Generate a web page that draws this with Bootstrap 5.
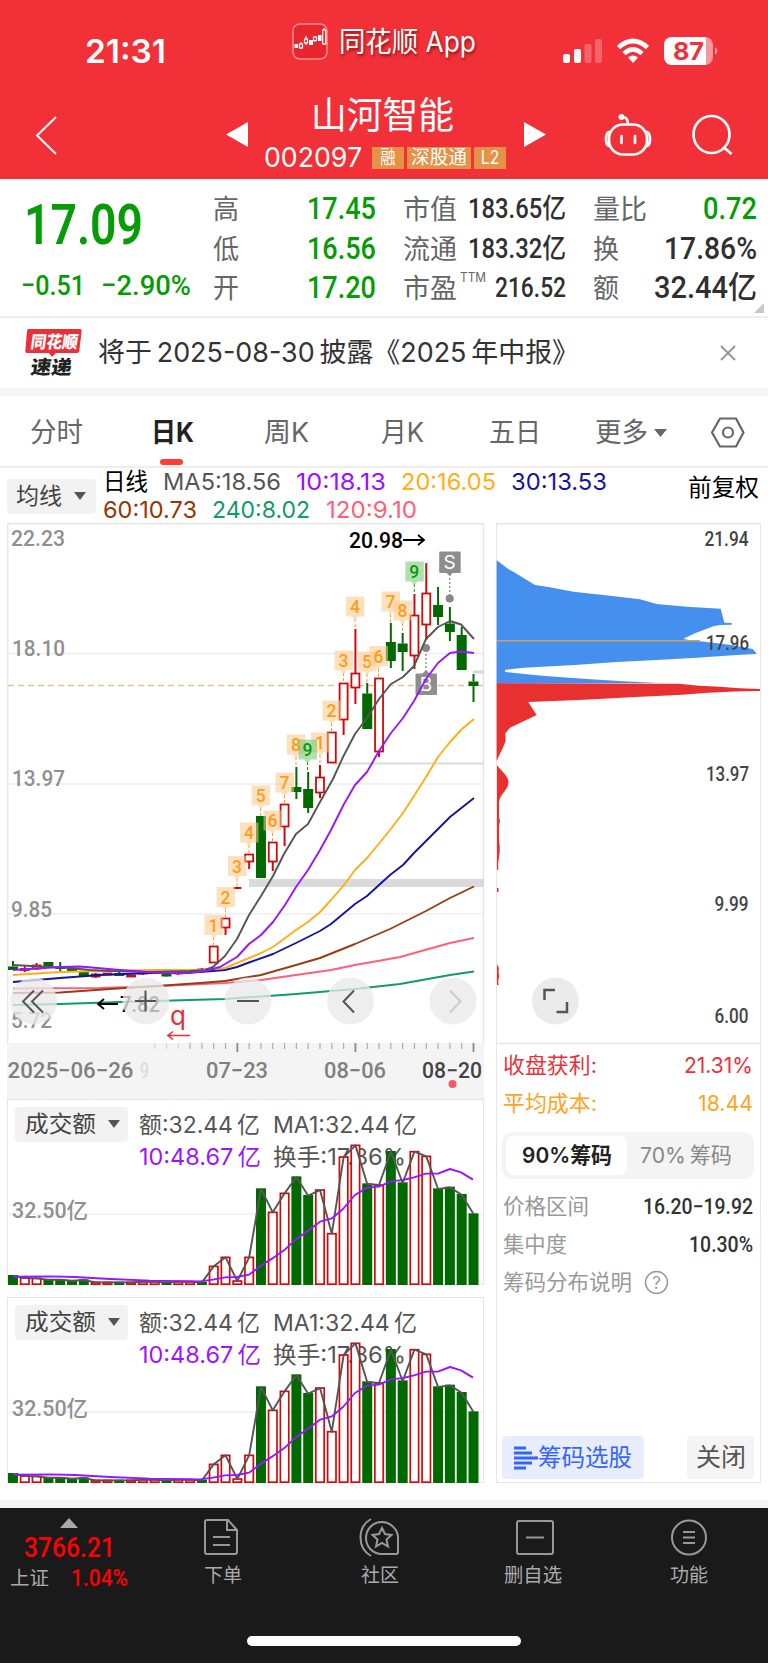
<!DOCTYPE html>
<html lang="zh-CN">
<head>
<meta charset="utf-8">
<meta name="viewport" content="width=device-width, initial-scale=1">
<title>山河智能 002097</title>
<link rel="stylesheet" href="https://cdn.jsdelivr.net/npm/bootstrap@5.3.0/dist/css/bootstrap.min.css">
<style>
body{width:768px;margin:0;background:#fff;color:#333;font-family:Inter,"Noto Sans CJK SC",sans-serif;line-height:1;overflow-x:hidden}
svg{display:block;flex:none;overflow:visible}
svg text{font-family:Inter,"Noto Sans CJK SC",sans-serif}
.din,svg text.din{font-family:Roboto,"Noto Sans CJK SC",sans-serif;font-weight:500}
.fit{display:inline-block;white-space:nowrap;flex:none;line-height:1}
.fit>span{display:inline-block;transform-origin:0 50%}
.topbar{background:#f13038;color:#fff;height:179px}
.status{height:84px;padding-left:85px}
.clock{font-size:33px;font-weight:600;margin-top:35px}
.appicon{margin:23px 0 0 126px}
.appname{font-size:28px;margin:28px 0 0 11px;text-shadow:1px 2px 3px rgba(90,0,0,.65)}
.signals{margin:30px 0 0 86px}
.titlebar{height:95px;padding-left:34px}
.stockname{font-size:37px;margin:13px 0 0 46px}
.stockcode{font-size:27.5px}
.codeline{margin-top:13px;height:22px}
.tagbox{background:#e59146;height:22px;font-size:19px;padding:1px 4px 0}
.quote{height:139px;border-bottom:2px solid #eee;padding:11px 11px 0 22px;position:relative}
.down{color:#069c06}
.price{font-size:55px;margin:8px 0 0 2px;font-weight:600!important}
.delta{font-size:28.5px;margin:19px 0 0 -1px;height:28px}
.qgrid{display:grid;grid-template-columns:163px 163px 164px;column-gap:27px;margin-left:22px;align-content:start;width:544px}
.qcell{height:39.4px;display:flex;align-items:center;justify-content:space-between}
.qcell .lab{font-size:27px;color:#666}
.big{font-size:30.5px}.mid{font-size:27px}
.ink{color:#303030}
.corner{position:absolute;right:4px;bottom:3px}
.notice{height:70px;padding-left:24px;font-size:27.5px}
.band{height:8px;background:#f4f4f4}
.tabs{height:72px;border-bottom:2px solid #eee;font-size:27px;color:#666;padding:3px 0 0 30px}
.tabs .on{color:#222;font-weight:700;position:relative}
.tabs .on:after{content:"";position:absolute;left:9px;top:40px;width:23px;height:6px;border-radius:3px;background:#fe3d33}
.legendrow{height:55px;padding-left:7px;font-size:23.5px}
.drop{background:#f2f2f2;border-radius:4px;height:35px;color:#444;flex:none}
.charts{padding-left:7px;height:960px;gap:12px}
.klcol{width:477px}
.panel{border:1.5px solid #e6e6e6;height:186px;width:477px;position:relative}
.panel svg{position:absolute;left:-1px;top:0;z-index:2}
.panel .info{padding:7px 0 0 7px;font-size:23px;color:#555}
.info .l2{margin-top:-1px}
.chipcol{width:265px;border:1.5px solid #e6e6e6;border-top:0;font-size:21.5px}
.chipcol .line{height:37.5px;padding:0 7px 0 6px}
.seg{height:47px;margin:10px 6px 9px 5px;background:#f4f4f4;border-radius:10px;padding:4px}
.seg .act{background:#fff;border-radius:8px;width:121px;height:39px;color:#222;font-weight:600}
.seg .oth{width:118px;color:#888}
.pick{background:#e8edfd;color:#3264ff;height:43px;width:142px;border-radius:4px;font-size:24px}
.shut{background:#f4f4f4;color:#555;height:43px;width:67px;border-radius:4px;font-size:25px}
.grayband{height:25px;border-bottom:8px solid #f4f4f4}
.bottombar{height:155px;background:#1a1a1a;color:#aaa;position:relative;font-size:19.5px}
.bottombar .item{display:flex;flex-direction:column;align-items:center}
.bottombar .item svg{margin-bottom:9px}
.home{position:absolute;left:247px;top:128px;width:274px;height:10px;border-radius:5px;background:#fff}
</style>
</head>
<body>
<header class="topbar">
  <div class="status d-flex align-items-start">
    <span class="fit clock" data-w="81">21:31</span>
    <svg class="appicon" width="36" height="37" viewBox="0 0 36 37"><rect x="1" y="1" width="34" height="35" rx="7" fill="#e9262d" stroke="#ff8e90" stroke-width="1.5"/><g fill="none" stroke="#fff" stroke-width="1.2"><path d="M9 19v7M14 13v9M23 13v6M32 5v17"/><g fill="#e9262d"><rect x="7.5" y="21" width="3" height="4"/><rect x="12.5" y="16" width="3" height="4"/><rect x="21.5" y="14" width="3" height="3.500"/><rect x="30.700" y="7" width="3" height="14"/></g></g><path d="M2.500 21h3.500v4H2.500zM17 17h4v5h-4zM26 12h3.500v6H26z" fill="#fff"/></svg>
    <span class="fit appname" data-w="137">同花顺 App</span>
    <svg class="signals" width="160" height="42" viewBox="560 30 160 42"><g fill="#fff"><rect x="561" y="54" width="7" height="9" rx="2"/><rect x="572" y="49" width="7" height="14" rx="2"/><g opacity=".25"><rect x="582.500" y="44" width="7" height="19" rx="2"/><rect x="593" y="39" width="7" height="24" rx="2"/></g><path d="M631 63l-5-5.500q5-4 10 0z"/><rect x="662" y="37" width="49" height="28" rx="8" opacity=".5"/><path d="M670 37h34v28h-34a8 8 0 0 1-8-8V45a8 8 0 0 1 8-8z"/><path d="M713 47q5 4 0 8z" opacity=".5"/></g><g fill="none" stroke="#fff" stroke-width="4.600"><path d="M616.500 47.500q14.500-13 29 0M622 53.700q9-8.500 18 0"/></g><text x="671" y="59.500" font-size="24.500" font-weight="700" fill="#f13038" textLength="31" lengthAdjust="spacingAndGlyphs">87</text></svg>
  </div>
  <div class="titlebar d-flex align-items-start">
    <svg width="26" height="46" viewBox="34 112 26 46" style="margin-top:28px"><path d="M56 117L37 135.500l19 18.500" fill="none" stroke="#fff" stroke-width="2"/></svg>
    <svg width="24" height="28" viewBox="225 121 24 28" style="margin:37px 0 0 165px"><path d="M248 122v25l-22-12.500z" fill="#fff"/></svg>
    <div style="width:274px">
      <div class="ps-3"><span class="fit stockname" data-w="143">山河智能</span></div>
      <div class="codeline d-flex align-items-center" style="margin-left:15px"><span class="fit stockcode" data-w="98">002097</span><span class="tagbox" style="margin-left:10px"><span class="fit" data-w="24">&nbsp;融&nbsp;</span></span><span class="tagbox" style="margin-left:3px"><span class="fit" data-w="56">深股通</span></span><span class="tagbox" style="margin-left:3px"><span class="fit" data-w="24">&thinsp;L2&thinsp;</span></span></div>
    </div>
    <svg width="24" height="28" viewBox="523 121 24 28" style="margin-top:37px"><path d="M524 122v25l22-12.500z" fill="#fff"/></svg>
    <svg width="130" height="46" viewBox="605 112 130 46" style="margin:28px 0 0 58px"><g fill="none" stroke="#fff" stroke-width="2.700"><path d="M622 117c5 0 6 3 6 7"/><rect x="609" y="124.500" width="38" height="30" rx="14"/><path d="M609 132q-3 1-3 7t3 7M647 132q3 1 3 7t-3 7M621.500 136v7M635 136v7" stroke-linecap="round"/><ellipse cx="711.500" cy="134.500" rx="18" ry="18.500"/><path d="M724 147.500l7.500 6.500"/></g><circle cx="621.500" cy="117" r="3" fill="#fff"/></svg>
  </div>
</header>

<section class="quote d-flex down">
  <div style="width:169px">
    <div><span class="fit din price" data-w="119">17.09</span></div>
    <div class="delta d-flex align-items-center din"><span class="fit" data-w="64">−0.51</span><span class="fit ms-3" data-w="90">−2.90%</span></div>
  </div>
  <div class="qgrid">
    <div class="qcell"><span class="fit lab" data-w="26">高</span><span class="fit din big" data-w="69">17.45</span></div>
    <div class="qcell"><span class="fit lab" data-w="54">市值</span><span class="fit din mid ink" data-w="98">183.65亿</span></div>
    <div class="qcell"><span class="fit lab" data-w="54">量比</span><span class="fit din big" data-w="54">0.72</span></div>
    <div class="qcell"><span class="fit lab" data-w="26">低</span><span class="fit din big" data-w="69">16.56</span></div>
    <div class="qcell"><span class="fit lab" data-w="54">流通</span><span class="fit din mid ink" data-w="98">183.32亿</span></div>
    <div class="qcell"><span class="fit lab" data-w="26">换</span><span class="fit din big ink" data-w="93">17.86%</span></div>
    <div class="qcell"><span class="fit lab" data-w="26">开</span><span class="fit din big" data-w="69">17.20</span></div>
    <div class="qcell"><span class="lab d-flex"><span class="fit" data-w="54">市盈</span><span class="fit" data-w="26" style="font-size:13px;margin:-4px 0 0 3px">TTM</span></span><span class="fit din mid ink" data-w="71">216.52</span></div>
    <div class="qcell"><span class="fit lab" data-w="26">额</span><span class="fit din big ink" data-w="103">32.44亿</span></div>
  </div>
  <svg class="corner" width="10" height="10"><path d="M10 0v10H0z" fill="#c8c8c8"/></svg>
</section>

<section class="notice d-flex align-items-center">
  <svg width="60" height="52" viewBox="24 327 60 52"><path d="M28.500 329H80q2 0 1.700 2l-2.500 20q-.3 2-2 2H56l-4 4-3-4H27q-2 0-1.700-2L27 331q.2-2 1.500-2z" fill="#eb3138"/><g transform="skewX(-8)" font-weight="900"><text x="79" y="348" font-size="17" fill="#fff" textLength="47" lengthAdjust="spacingAndGlyphs">同花顺</text><text x="82.500" y="374" font-size="19" fill="#222" textLength="41" lengthAdjust="spacingAndGlyphs">速递</text></g></svg>
  <span class="fit" data-w="481" style="margin-left:14px">将于&thinsp;2025-08-30&thinsp;披露《2025&thinsp;年中报》</span>
  <svg width="18" height="18" viewBox="0 0 18 18" style="margin-left:140px"><path d="M2 2l14 14M16 2L2 16" stroke="#999" stroke-width="2"/></svg>
</section>
<div class="band"></div>

<nav class="tabs d-flex align-items-center">
  <span class="fit" data-w="53">分时</span>
  <span class="fit on" data-w="43" style="margin-left:68px">日K</span>
  <span class="fit" data-w="45" style="margin-left:70px">周K</span>
  <span class="fit" data-w="43" style="margin-left:72px">月K</span>
  <span class="fit" data-w="52" style="margin-left:65px">五日</span>
  <span class="fit" data-w="53" style="margin-left:54px">更多</span>
  <svg width="13" height="10" style="margin-left:6px"><path d="M0 1h13L6.500 9z" fill="#666"/></svg>
  <svg width="36" height="32" viewBox="0 0 36 32" style="margin-left:43px"><g fill="none" stroke="#666" stroke-width="2.200"><path d="M10 1.500h16l7.500 14L26 29.500H10L2 15.500z" stroke-linejoin="round"/><circle cx="18" cy="15.500" r="5"/></g></svg>
</nav>

<section class="legendrow d-flex align-items-start">
  <div class="drop d-flex align-items-center" style="width:89px;margin-top:11px;padding-left:9px"><span class="fit" data-w="46" style="font-size:23px">均线</span><svg width="12" height="9" style="margin-left:12px"><path d="M0 0h12L6 8z" fill="#555"/></svg></div>
  <div style="margin:1px 0 0 7px;width:585px">
    <div class="d-flex align-items-center" style="height:25px"><span class="fit text-black" data-w="45">日线</span><span class="fit" data-w="118" style="margin-left:15px;color:#555">MA5:18.56</span><span class="fit" data-w="90" style="margin-left:15px;color:#a010ff">10:18.13</span><span class="fit" data-w="95" style="margin-left:15px;color:#ffae13">20:16.05</span><span class="fit" data-w="96" style="margin-left:15px;color:#1514a0">30:13.53</span></div>
    <div class="d-flex align-items-center" style="height:31px"><span class="fit" data-w="94" style="color:#983506">60:10.73</span><span class="fit" data-w="98" style="margin-left:15px;color:#109b67">240:8.02</span><span class="fit" data-w="91" style="margin-left:16px;color:#ff6079">120:9.10</span></div>
  </div>
  <span class="fit text-black" data-w="71" style="margin-top:8px">前复权</span>
</section>

<main class="charts d-flex">
  <div class="klcol">
    <svg id="kline" width="477" height="576" viewBox="7 523 477 576"></svg>
    <div class="panel vol"></div>
    <div class="panel vol" style="margin-top:12px"></div>
  </div>
  <aside class="chipcol d-flex flex-column">
    <svg id="chips" width="265" height="521" viewBox="496 523 265 521" style="margin-left:-1px"></svg>
    <div class="line d-flex align-items-center justify-content-between" style="color:#eb3138;margin-top:3px"><span class="fit" data-w="94">收盘获利:</span><span class="fit" data-w="69">21.31%</span></div>
    <div class="line d-flex align-items-center justify-content-between" style="color:#ffa31f"><span class="fit" data-w="94">平均成本:</span><span class="fit" data-w="55">18.44</span></div>
    <div class="seg d-flex align-items-center"><span class="act d-flex align-items-center justify-content-center"><span class="fit" data-w="90">90%筹码</span></span><span class="oth d-flex justify-content-center"><span class="fit" data-w="92">70%&thinsp;筹码</span></span></div>
    <div class="line d-flex align-items-center justify-content-between"><span class="fit" data-w="86" style="color:#999">价格区间</span><span class="fit din" data-w="110">16.20−19.92</span></div>
    <div class="line d-flex align-items-center justify-content-between"><span class="fit" data-w="64" style="color:#999">集中度</span><span class="fit din" data-w="64">10.30%</span></div>
    <div class="line d-flex align-items-center" style="color:#999;padding-top:2px"><span class="fit" data-w="129">筹码分布说明</span><svg width="25" height="25" style="margin-left:12px"><circle cx="12.500" cy="12.500" r="11" fill="none" stroke="#999" stroke-width="1.500"/><text x="12.500" y="18.500" font-size="17" text-anchor="middle" fill="#999">?</text></svg></div>
    <div class="mt-auto d-flex justify-content-between" style="padding:0 6px 3px 5px">
      <span class="pick d-flex align-items-center justify-content-center"><svg width="24" height="24"><path d="M0 2h12M0 7h18M0 12h24M0 17h18M0 22h12" stroke="#3264ff" stroke-width="3"/></svg><span class="fit" data-w="94">筹码选股</span></span>
      <span class="shut d-flex align-items-center justify-content-center"><span class="fit" data-w="50">关闭</span></span>
    </div>
  </aside>
</main>
<div class="grayband"></div>

<footer class="bottombar d-flex">
  <div style="width:130px;padding:10px 0 0 10px">
    <svg width="18" height="10" style="margin-left:50px"><path d="M9 0l9 10H0z" fill="#aaa"/></svg>
    <div class="din" style="color:#f00;font-size:28px;margin:6px 0 0 14px"><span class="fit" data-w="91">3766.21</span></div>
    <div class="d-flex align-items-center" style="margin-top:5px"><span class="fit" data-w="39">上证</span><span class="fit din" data-w="57" style="color:#f00;font-size:23px;margin-left:22px">1.04%</span></div>
  </div>
  <div class="item" style="width:80px;margin-left:51px;padding-top:10px"><svg width="36" height="39" viewBox="0 0 36 39" fill="none" stroke="#999" stroke-width="2"><path d="M4 2h21l9 10v22q0 2-2 2H4q-2 0-2-2V4q0-2 2-2zM24 2v10h10M10 19h17M10 27h17"/></svg><span class="fit" data-w="38" style="margin-left:3px">下单</span></div>
  <div class="item" style="width:80px;margin-left:78px;padding-top:10px"><svg width="42" height="39" viewBox="0 0 42 39" fill="none" stroke="#999" stroke-width="2"><path d="M13 1C-1 9-1 30 13 38M24 4c8 0 16 7 16 16v14q0 2-2 2H24C14 36 8 28 8 20S14 4 24 4z"/><path d="M24 10l3 6 6.500 1-5 4.500 1.500 7-6-3.500-6 3.500 1.500-7-5-4.500 6.500-1z"/></svg><span class="fit" data-w="38" style="margin-left:2px">社区</span></div>
  <div class="item" style="width:80px;margin-left:76px;padding-top:10px"><svg width="40" height="39" viewBox="0 0 40 39" fill="none" stroke="#999" stroke-width="2"><rect x="2" y="3" width="36" height="33" rx="2"/><path d="M11 19.500h18"/></svg><span class="fit" data-w="58" style="margin-right:4px">删自选</span></div>
  <div class="item" style="width:80px;margin-left:74px;padding-top:10px"><svg width="38" height="39" viewBox="0 0 38 39" fill="none" stroke="#999" stroke-width="2"><circle cx="19" cy="19.500" r="17"/><path d="M13 14h12M13 19.500h12M13 25h12"/></svg><span class="fit" data-w="38">功能</span></div>
  <div class="home"></div>
</footer>

<script>
// text(x, baseline, width, string, size, colour, class)
const T=(x,y,w,s,z,c,k='din',e='')=>`<text x="${x}" y="${y}" class="${k}" font-size="${z}" fill="${c}" textLength="${w}" lengthAdjust="spacingAndGlyphs" ${e}>${s}</text>`;
const L=(x1,y1,x2,y2,c,w=1.5,e='')=>`<line x1="${x1}" y1="${y1}" x2="${x2}" y2="${y2}" stroke="${c}" stroke-width="${w}" ${e}/>`;
const P=(p,c)=>`<polyline points="${p}" fill="none" stroke="${c}" stroke-width="1.9" stroke-linejoin="round"/>`;
const X=k=>473.5-11.808*k, RED='#d00a0a', GREEN='#006a00';

// candles: [days before last, colour, body top, body bottom, wick top, wick bottom]
const candles=[[0,'g',681.5,686,674,702],[1,'g',635,670,627,670],[2,'g',623.5,632,607,641],[3,'g',605,617,587,625],[4,'r',593,625,563,640],[5,'r',615,656,594,669],[6,'g',643.5,652,633,671],[7,'g',642,661,623,668],[8,'r',678,752,678,757],[9,'g',693.5,729,683,729],[10,'r',673,688,629,704],[11,'r',683,720,683,735],[12,'r',732,763,732,763],[13,'r',777,793,765,798],[14,'g',789,808,772,813],[15,'g',787,792,767,799],[16,'r',804,827,804,846],[17,'r',842,862,842,871],[18,'g',816,878,816,878],[19,'r',854,862,854,869],[20,'g0',887,889,887,889],[21,'r',918,928,918,935],[22,'r',946,963,946,963],
[23,'r',969,970.5,968,972],[24,'g',970,972,969,973],[25,'r',972,974,971,975],[26,'g',972.5,976.5,971,977],[27,'r',971,973,971,974],[28,'r',972,974,971,975],[29,'r',975,977,975,977],[30,'g',973,976,972,976],[31,'r',973,975,973,975],[32,'r',974,977,973,978],[33,'g',972,976.5,972,976.5],[34,'g',968,971,967,971],[35,'g',967.5,969,962,971],[36,'g',962,966,962,966],[37,'r',965,969,963,970],[38,'r',968.5,970,966,972],[39,'g',966.5,970,961,970]];
let s='<rect x="7" y="1043" width="477" height="56" fill="#f4f4f4"/><path d="M7.700 1043V523.700H483.500V1043" fill="none" stroke="#e6e6e6" stroke-width="1.5"/>';
s+=[653.5,784,914].map(y=>L(8,y,483,y,'#eeeeee')).join('');
s+='<path d="M249 879H484v8H249z" fill="#dadada"/>'+L(331,763.5,484,763.5,'#dcdcdc',2)+L(473,672,484,672,'#d8d8d8',3);
s+=L(8,685.5,483,685.5,'#e0c196',1.3,'stroke-dasharray="6 4"');
s+=T(11,546,54,'22.23',22,'#909090')+T(12,656,53,'18.10',22,'#909090')+T(12,786,53,'13.97',22,'#909090')+T(11,917,41,'9.85',22,'#909090')+T(11,1028,41,'5.72',22,'#909090');
for(const [k,c,a,b,u,d] of candles){const x=X(k);
  if(c=='g0'){s+=L(x-4,888,x+4,888,RED,2);continue}
  s+=L(x,u,x,a,c=='r'?RED:GREEN,2)+L(x,b,x,d,c=='r'?RED:GREEN,2);
  s+=c=='r'?`<rect x="${x-4}" y="${a+.5}" width="8" height="${Math.max(b-a-1,1)}" fill="#fff" stroke="${RED}" stroke-width="1.8"/>`:`<rect x="${x-5}" y="${a}" width="10" height="${b-a}" fill="${GREEN}"/>`}
// count marks above the candles: [label, x, centre y, candle top]
for(const [t,x,y,b] of [['8',296,745,767],['1',320,743,765],['2',331.5,711,732],['3',343.5,661,683],['4',355,607,629],['5',367,662,683],['6',378.5,656.5,678],['7',390.5,602,623],['8',402.5,611,633],['7',284.5,783,804],['5',260.700,796,816],['6',272.5,821,842],['4',249,833,854],['3',237,866.5,887],['2',225.5,897.5,918],['1',213.5,925.5,946],['9',307.5,750,772],['9',414.3,572,594]]){
  const n=t=='9',c=n?'#0a9a0a':'#ff9c18';
  s+=L(x,y+12,x,b,c,1,'stroke-dasharray="3 2"')+`<path d="M${x-9} ${y-10.500}h18.500v20h-6.500l-3 4-3-4h-6z" fill="${n?'#6cc86c':'#fcc888'}" opacity=".55"/>`+`<text x="${x}" y="${y+6}" class="din" font-size="17.500" fill="${c}" text-anchor="middle">${t}</text>`}
for(const [t,x,y,cy,d] of [['S',449.7,562,598.5,1],['B',426,684,648,-1]])
  s+=`<rect x="${x-10.500}" y="${y-10.500}" width="21.500" height="21.500" rx="1" fill="#8e8e8e"/><path d="M${x-4} ${y+d*10}h8l-4 ${d*4}z" fill="#8e8e8e"/>`+L(x,y+d*12,x,cy,'#888',1.3,'stroke-dasharray="2 2"')+`<circle cx="${x}" cy="${cy}" r="4" fill="#888"/><text x="${x}" y="${y+7}" font-size="19" fill="#fff" text-anchor="middle">${t}</text>`;
s+=P('13,1005 60,1004 120,1002 225,999 296,994 355,989 400,984 450,975 474,971.500','#109b67')
+P('13,988.500 100,988 160,986 225,983 261,980 296,975 331,970 355,965 378,961 400,957 450,943 474,938','#ff6079')
+P('13,993 60,992.500 110,989 150,986.500 200,983 225,981 261,975 296,965 320,958 355,944 390,929 426,911 450,898 474,886.500','#983d16')
+P('13,982 60,978 100,975 150,973 200,972 225,970 237,967 249,962.500 273,954 296,943 320,931 331,924 355,904 367,896 390,875 403,865 414,853 426,841 450,817 474,798','#1514a0')
+P('13,975 60,972 100,971 150,970 200,970 225,968 237,963 249,958 261,953 273,947 296,930 308,922 320,912 331,900 344,885 355,870 368,857 390,830 403,813 414,796 426,777 438,757 450,742 462,729 474,719','#ffae13')
+P('13,965 50,967 70,968 90,970 110,971 150,972 190,971 205,970 213,967 225,956 237,939 249,915 261,896 273,876 284,854 296,834 308,824 320,802 333,779 343,757 355,734 367,718 379,699 391,684 403,677 414,666 426,639 438,627 450,621 461,624.500 474,639','#555')
+P('13,970 60,967 80,966.500 120,970 160,973 190,973 205,971 220,967 237,957 249,944 261,935 273,922 285,905 296,887 308,870 320,850 331,830 344,804 355,785 367,772 379,751 391,733 403,718 414,701 426,679 438,663 450,653 461,651.500 474,653','#9a14ff');
s+=T(349,548,54,'20.98',22.5,'#000')+'<path d="M403 540h21m-6-5l6 5-6 5M118 1004H98m6-5l-6 5 6 5" fill="none" stroke="#000" stroke-width="1.8"/>'+T(120,1012,40,'7.82',22,'#000');
s+='<text x="170" y="1025" font-size="26" fill="#e23035">q</text><path d="M190 1035.500H168m5-4l-5 4 5 4" fill="none" stroke="#e23035" stroke-width="1.6"/>';
for(const x of [33.5,146,248,350.5,453]) s+=`<circle cx="${x}" cy="1001" r="23.500" fill="#e9e9e9" fill-opacity=".78"/>`;
s+='<g fill="none" stroke="#555" stroke-width="2"><path d="M34 990.500l-11 11 11 11M43 990.500l-11 11 11 11M135 1001h21M145.500 990.500v21M237 1001h22M354 990.500l-10.500 11 10.500 11"/><path d="M450 990.500l10.500 11-10.500 11" stroke="#ccc"/></g>';
for(let k=0;k<28;k++){const x=X(k),m=k%10==0;s+=L(x,1043,x,m?1052:1049,m?'#888':'#aaa',m?1.8:1.2,k>24?'opacity=".4"':'')}
s+=T(7.5,1078,126,'2025−06−26',22.5,'#808080')+T(140,1078,9,'9',22.5,'#ddd')+T(206,1078,62,'07−23',22.5,'#808080')+T(324,1078,62,'08−06',22.5,'#808080')+T(422,1078,60,'08−20',21.5,'#444')+'<circle cx="452.500" cy="1084" r="4" fill="#f65c62"/>';
document.getElementById('kline').innerHTML=s;

// turnover bars, oldest first: top edges in thirds of a pixel
const tops='540g 547r 548r 552g 552g 555g 553g 560r 560r 560g 560r 558r 558r 560g 558r 558r 560g 512r 485r 556r 485r 280g 350r 293r 244g 300g 283r 414r 184r 149r 265g 268r 168g 262g 168r 182r 280g 275g 297g 355g'.split(' ');
let v=L(2,114,475,114,'#eee'),line='';
tops.forEach((t,i)=>{const x=X(39-i)-7,y=parseInt(t)/3-5,g=t.endsWith('g');
  v+=g?`<rect x="${x-5}" y="${y}" width="10" height="${185-y}" fill="${GREEN}"/>`:`<rect x="${x-4.200}" y="${y+.7}" width="8.400" height="${183.5-y}" fill="#fff" stroke="${RED}" stroke-width="1.7"/>`;
  line+=`${x},${y+.7} `});
const ma='13,545 50,544 75,546 110,552 150,557 200,559 213,554 225,547 237,546 249,539 261,512 272,491 284,466 296,433 308,407 320,380 332,370 343,342 355,300 367,278 379,275 391,259 403,255 414,247 426,236 438,236 450,222 461,232 473,254'.split(' ').map(p=>{const[a,b]=p.split(',');return(a-7)+','+(b/3-5)}).join(' ');
v+=P(line,'#555')+P(ma,'#9a14ff')+T(5,118,76,'32.50亿',22,'#909090');
document.querySelectorAll('.vol').forEach(e=>e.innerHTML=`<svg width="477" height="185">${v}</svg><div class="info d-flex"><div class="drop d-flex align-items-center" style="width:113px;padding-left:10px"><span class="fit" data-w="71">成交额</span><svg class="position-static" width="12" height="9" style="margin-left:12px"><path d="M0 0h12L6 8z" fill="#555"/></svg></div><div style="margin-left:11px"><div class="d-flex align-items-center" style="height:36px"><span class="fit" data-w="121">额:32.44&thinsp;亿</span><span class="fit" data-w="144" style="margin-left:13px">MA1:32.44&thinsp;亿</span></div><div class="d-flex align-items-center l2" style="height:30px"><span class="fit" data-w="122" style="color:#9a14ff">10:48.67&thinsp;亿</span><span class="fit" data-w="133" style="margin-left:12px">换手:17.86%</span></div></div></div>`);

// chip distribution
const q=(p,x0,y0)=>p.split(' ').map(a=>{const[x,y]=a.split(',');return(x0+x/3)+','+(y0+y/3)}).join(' ');
let c='<path d="M496 523.700H761" stroke="#e6e6e6" stroke-width="1.500"/><path d="M496 1043.500H761" stroke="#e6e6e6" stroke-width="1.500"/>';
c+=`<polygon fill="#458fee" points="${q('50,496 85,522 100,530 165,570 210,577 280,590 370,600 480,613 530,627 620,635 722,641 733,683 755,684 755,689 720,690 700,694 645,715 610,731 625,735 680,741 755,750 818,762 829,775 829,777 770,780 650,788 530,795 410,801 285,810 130,818 75,825 75,831 140,838 195,843 310,851 430,859 537,864 50,866',480,395)}"/>`;
c+=`<polygon fill="#e93030" points="${q('50,865 598,866 658,872 720,875 778,880 840,882 840,888 780,889 683,893 606,899 530,903 450,907 370,911 295,915 220,918 145,921 152,932 160,945 170,960 90,998 76,1015 77,1038 70,1055 62,1072 50,1098',480,395)}"/>`;
c+=`<path fill="#e93030" d="M497 765c4 6 11 10 11.500 17c0 8-8 11-9.500 20v15l1 4-1 5v13l.7 7v6l-1.500 11v7h-1.200zM497 888h1.500v4h-1.500zM497 964l2 4-.5 4 .8 4-1 4 .2 5H497z"/>`;
c+=L(497,640.8,700,640.8,'#cfa060',1.5);
c+=T(704.5,545.500,44,'21.94',20,'#444')+T(706,650,43,'17.96',20,'#444')+T(706,780.500,43,'13.97',20,'#444')+T(714.5,910.5,34,'9.99',20,'#444')+T(714.5,1023,34,'6.00',20,'#444');
c+='<circle cx="555.500" cy="1001" r="23.500" fill="#ebebeb"/><path d="M544.500 1000v-10h10.500M567 1002v10h-10.500" fill="none" stroke="#555" stroke-width="2.500"/>';
document.getElementById('chips').innerHTML=c;

// scale each label to its design width
document.querySelectorAll('.fit').forEach(e=>{
  const i=document.createElement('span');i.textContent=e.textContent;e.textContent='';e.append(i);
  const n=i.getBoundingClientRect().width,w=+e.dataset.w;
  e.style.width=w+'px';i.style.transform=`scaleX(${w/n})`;
});
</script>
<script src="https://cdn.jsdelivr.net/npm/bootstrap@5.3.0/dist/js/bootstrap.bundle.min.js"></script>
</body>
</html>
